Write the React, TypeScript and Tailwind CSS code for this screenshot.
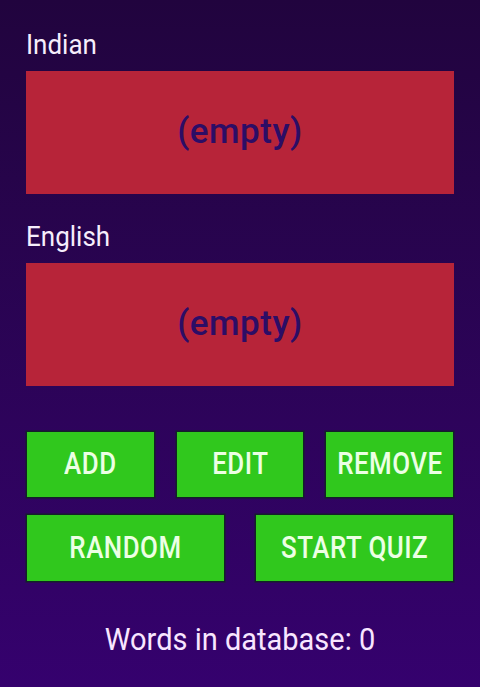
import React from 'react'

function Field({ label }: { label: string }) {
  return (
    <div>
      <div className="text-[26px] leading-none text-[#f6eefc] pl-[26px] pt-[4px]">
        <span className="inline-block scale-y-[1.08] origin-bottom">{label}</span>
      </div>
      <div className="mx-[26px] mt-[13px] h-[123px] bg-[#b72439] flex items-center justify-center">
        <span className="text-[35px] font-medium text-[#2c0d66] tracking-[0.5px]">(empty)</span>
      </div>
    </div>
  )
}

function Btn({ label, className }: { label: string; className: string }) {
  return (
    <button
      className={`bg-[#30c81d] shadow-[0_0_0_1.5px_#14202a] text-[27px] font-medium text-[#ecffe4] ${className}`}
    >
      <span className="inline-block scale-y-[1.14] scale-x-[0.96] tracking-[0.5px]">{label}</span>
    </button>
  )
}

export default function App() {
  return (
    <div
      className="w-[480px] h-[687px] overflow-hidden bg-gradient-to-b from-[#21043e] to-[#35016e] pt-[28px]"
      style={{ fontFamily: 'Roboto, "Noto Sans", sans-serif' }}
    >
      <Field label="Indian" />
      <div className="mt-[26px]">
        <Field label="English" />
      </div>

      <div className="mx-[27px] mt-[46px] grid grid-cols-3 gap-[23px]">
        <Btn label="ADD" className="h-[65px]" />
        <Btn label="EDIT" className="h-[65px]" />
        <Btn label="REMOVE" className="h-[65px]" />
      </div>
      <div className="mx-[27px] mt-[18px] flex justify-between">
        <Btn label="RANDOM" className="w-[197px] h-[66px]" />
        <Btn label="START QUIZ" className="w-[197px] h-[66px]" />
      </div>

      <div className="mt-[37px] text-center text-[29px] text-[#f8e6ff]">
        <span className="inline-block scale-y-[1.08]">Words in database: 0</span>
      </div>
    </div>
  )
}
